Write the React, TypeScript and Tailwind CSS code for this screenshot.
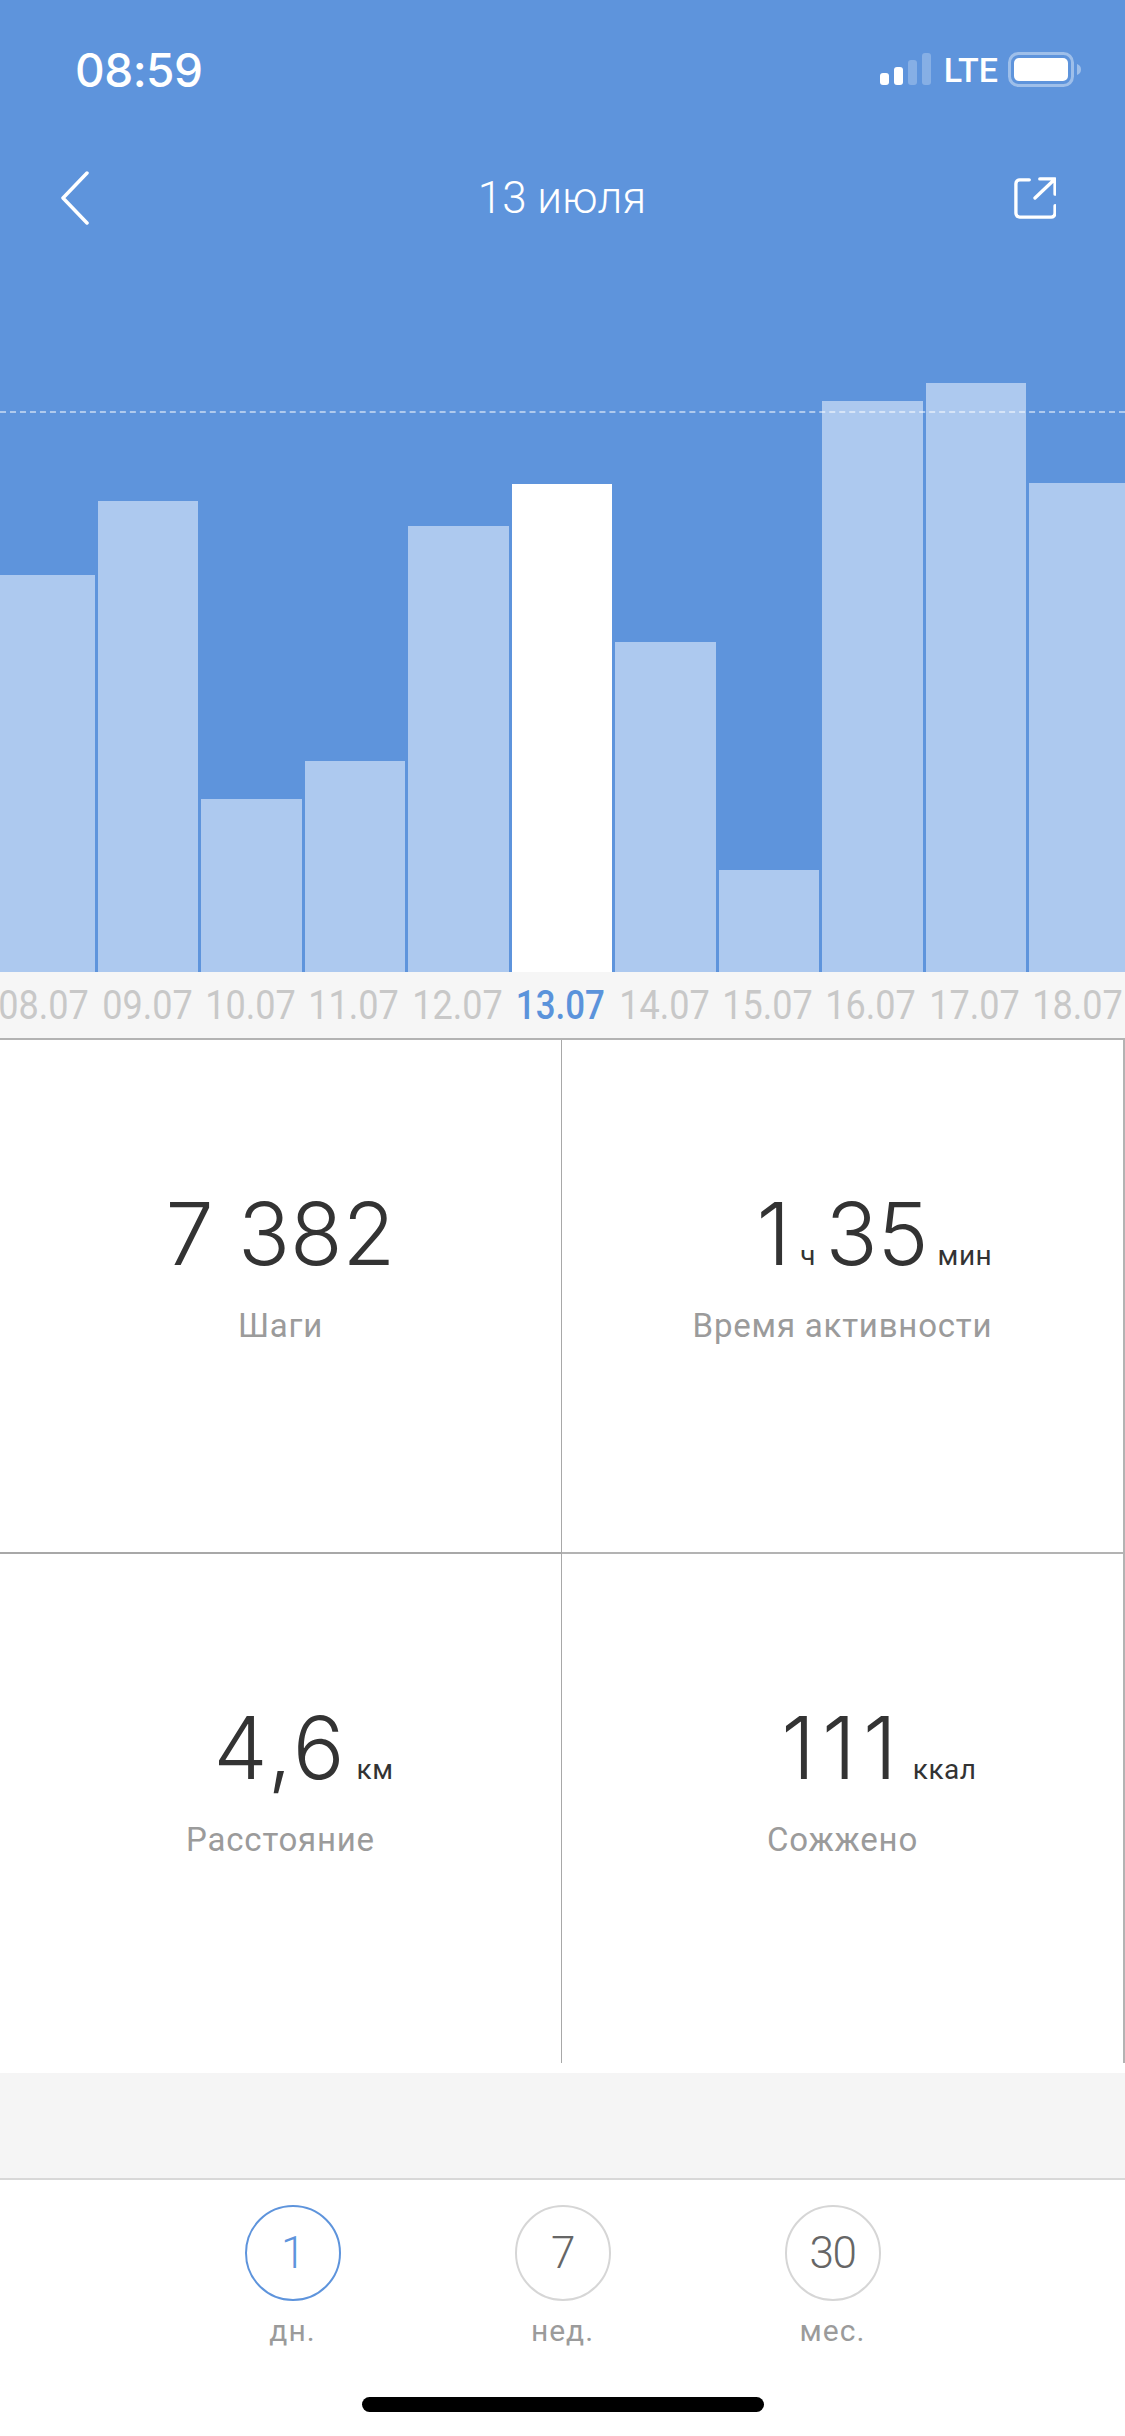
const bars = [
  { w: 95, h: 397 },
  { w: 100, h: 471 },
  { w: 101, h: 173 },
  { w: 100, h: 211 },
  { w: 101, h: 446 },
  { w: 100, h: 488, active: true },
  { w: 101, h: 330 },
  { w: 100, h: 102 },
  { w: 101, h: 571 },
  { w: 100, h: 589 },
  { w: 96, h: 489 },
];

const dates = ["08.07", "09.07", "10.07", "11.07", "12.07", "13.07", "14.07", "15.07", "16.07", "17.07", "18.07"];

function StatusBar() {
  return (
    <div className="flex h-[52px] mt-[44px] items-center justify-between pl-[75px] pr-[43px] text-white">
      <span className="text-[46px] font-medium leading-none font-['Inter',sans-serif] tracking-[-0.5px]">08:59</span>
      <div className="flex items-center">
        <svg width="52" height="34" viewBox="0 0 52 34" className="mr-[12px]">
          <rect x="0" y="20" width="9" height="12" rx="3" fill="#fff" />
          <rect x="14" y="14" width="9" height="18" rx="3" fill="#fff" />
          <rect x="28" y="7" width="9" height="25" rx="3" fill="#fff" fillOpacity="0.25" />
          <rect x="42" y="0" width="9" height="32" rx="3" fill="#fff" fillOpacity="0.25" />
        </svg>
        <span className="text-[34px] leading-none font-medium font-['Roboto',sans-serif] mr-[10px]">LTE</span>
        <svg width="74" height="36" viewBox="0 0 74 36">
          <rect x="1.5" y="1.5" width="63" height="32" rx="9" fill="none" stroke="#fff" strokeOpacity="0.4" strokeWidth="3" />
          <rect x="6" y="6" width="54" height="23" rx="5" fill="#fff" />
          <path d="M69 12c3 1 4 3 4 5.500s-1 4.500-4 5.500z" fill="#fff" fillOpacity="0.4" />
        </svg>
      </div>
    </div>
  );
}

function Header() {
  return (
    <div className="grid h-[60px] mt-[72px] grid-cols-[1fr_auto_1fr] items-center pl-[60px] pr-[69px] text-white">
      <svg width="30" height="54" viewBox="0 0 30 54" fill="none" stroke="#fff" strokeWidth="3.500" strokeLinecap="round" strokeLinejoin="round">
        <path d="M27 2 3 27l24 25" />
      </svg>
      <span className="ml-[8px] text-[44px] leading-none font-light font-['Roboto',sans-serif]">13 июля</span>
      <svg width="42" height="42" viewBox="0 0 44 44" fill="none" stroke="#fff" strokeWidth="3.500" strokeLinecap="round" strokeLinejoin="round" className="justify-self-end">
        <path d="M16 3H6a4 4 0 0 0-4 4v31a4 4 0 0 0 4 4h33a4 4 0 0 0 4-4v-8" />
        <path d="M27 2h16v16M41 4 22 22" />
      </svg>
    </div>
  );
}

function Chart() {
  return (
    <div className="flex flex-1 items-end gap-[3px]">
      {bars.map((b, i) => (
        <div
          key={i}
          className={b.active ? "bg-white" : "bg-[#adc9ef]"}
          style={{ width: b.w, height: b.h }}
        />
      ))}
    </div>
  );
}

function Metric({ value, unit, label }: { value: React.ReactNode; unit: string; label: string }) {
  return (
    <div className="flex h-full flex-col items-center pt-[139px]">
      <div className="relative text-[86px] leading-[110px] font-light text-[#333333] font-['Inter',sans-serif]">
        {value}
        {unit && (
          <span className="absolute left-full bottom-[19px] ml-[9px] whitespace-nowrap text-[28px] leading-none tracking-[0.5px] font-normal font-['Roboto',sans-serif]">
            {unit}
          </span>
        )}
      </div>
      <div className="mt-[17px] text-[33px] leading-[40px] tracking-[0.8px] text-[#9b9b9b] font-['Roboto',sans-serif]">{label}</div>
    </div>
  );
}

function Period({ n, label, active }: { n: string; label: string; active?: boolean }) {
  return (
    <div className="flex w-[95px] flex-col items-center">
      <div
        className={`flex h-[96px] w-[96px] items-center justify-center rounded-full border-2 text-[44px] tracking-[-1.5px] font-light font-['Roboto',sans-serif] ${
          active ? "border-[#5e94dc] text-[#5e94dc]" : "border-[#d6d6d6] text-[#666666]"
        }`}
      >
        {n}
      </div>
      <span className="mt-[12px] text-[30px] leading-[36px] tracking-[1px] text-[#9b9b9b] font-['Roboto',sans-serif]">{label}</span>
    </div>
  );
}

export default function App() {
  return (
    <div className="relative flex h-[2436px] w-[1125px] flex-col overflow-hidden bg-white">
      {/* верхний блок с графиком */}
      <div className="relative flex h-[972px] flex-col bg-[#5e94dc]">
        <StatusBar />
        <Header />
        <Chart />
        <div className="absolute left-0 right-0 top-[411px] border-t-2 border-dashed border-white/50" />
      </div>

      {/* даты */}
      <div className="flex h-[66px] items-center overflow-hidden bg-[#f6f6f6]">
        <div className="-ml-[8px] flex">
          {dates.map((d) => (
            <div key={d} className="flex w-[103.4px] shrink-0 justify-center">
              <span
                className={`inline-block text-[41px] leading-none font-['Roboto',sans-serif] ${
                  d === "13.07" ? "scale-x-[0.85] font-medium text-[#5b93db]" : "scale-x-[0.88] text-[#c8c8c8]"
                }`}
              >
                {d}
              </span>
            </div>
          ))}
        </div>
      </div>

      {/* показатели */}
      <div className="grid h-[1025px] grid-cols-[562px_563px] grid-rows-[514px_509px] border-t-2 border-[#b3b3b3]">
        <div className="border-r border-b-2 border-[#a8a8a8]">
          <Metric value="7 382" unit="" label="Шаги" />
        </div>
        <div className="border-r-2 border-b-2 border-[#b3b3b3]">
          <Metric
            value={
              <>
                1<span className="mx-[10px] text-[28px] leading-none font-normal font-['Roboto',sans-serif]">ч</span>35
              </>
            }
            unit="мин"
            label="Время активности"
          />
        </div>
        <div className="border-r border-[#a8a8a8]">
          <Metric value={<span className="tracking-[3px]">4,6</span>} unit="км" label="Расстояние" />
        </div>
        <div className="border-r-2 border-[#b3b3b3]">
          <Metric value={<span className="tracking-[7px]">111</span>} unit="ккал" label="Сожжено" />
        </div>
      </div>

      <div className="mt-[10px] h-[107px] border-b-2 border-[#d8d8d8] bg-[#f5f5f5]" />

      {/* период */}
      <div className="flex flex-1 flex-col items-center">
        <div className="mt-[25px] flex gap-[175px]">
          <Period n="1" label="дн." active />
          <Period n="7" label="нед." />
          <Period n="30" label="мес." />
        </div>
        <div className="mt-[48px] h-[15px] w-[402px] rounded-[8px] bg-black" />
      </div>
    </div>
  );
}
